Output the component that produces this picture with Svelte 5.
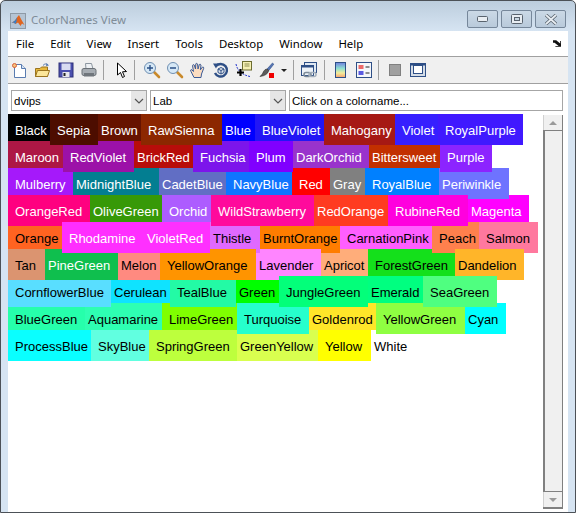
<script lang="ts">
	// name, width, background, z-order, narrow left padding, dark text
	const rows = [
		[
			['Black', 42, '#000000', 0, 0],
			['Sepia', 48, '#4d0d00', 2, 0],
			['Brown', 43, '#661300', 0, 1],
			['RawSienna', 81, '#8c2700', 2, 0],
			['Blue', 33, '#0000ff', 0, 1],
			['BlueViolet', 69, '#2216f5', 0, 0],
			['Mahogany', 71, '#a61914', 2, 0],
			['Violet', 43, '#361fff', 1, 0],
			['RoyalPurple', 85, '#4019ff', 4, 0]
		],
		[
			['Maroon', 55, '#ad1745', 0, 0],
			['RedViolet', 71, '#9c11a8', 1, 0],
			['BrickRed', 59, '#b80d0a', 0, 1],
			['Fuchsia', 56, '#7c15eb', 1, 0],
			['Plum', 44, '#8000ff', 1, 0],
			['DarkOrchid', 76, '#9933cc', 0, 1],
			['Bittersweet', 71, '#c23000', 0, 1],
			['Purple', 52, '#8c24ff', 3, 0]
		],
		[
			['Mulberry', 65, '#a519fa', 0, 0],
			['MidnightBlue', 86, '#037e91', 0, 1],
			['CadetBlue', 67, '#616ec4', 0, 1],
			['NavyBlue', 66, '#0f75ff', 0, 0],
			['Red', 38, '#ff0000', 0, 0],
			['Gray', 35, '#808080', 0, 1],
			['RoyalBlue', 74, '#0080ff', 2, 0],
			['Periwinkle', 70, '#6e73ff', 2, 1]
		],
		[
			['OrangeRed', 82, '#ff0080', 1, 0],
			['OliveGreen', 72, '#379908', 0, 1],
			['Orchid', 49, '#ad5cff', 0, 0],
			['WildStrawberry', 103, '#ff0a9c', 4, 0],
			['RedOrange', 74, '#ff3b21', 2, 1],
			['RubineRed', 80, '#ff00de', 2, 0],
			['Magenta', 61, '#ff00ff', 0, 1]
		],
		[
			['Orange', 54, '#ff6321', 0, 0, 1],
			['Rhodamine', 78, '#ff2eff', 5, 0],
			['VioletRed', 70, '#ff30ff', 5, 0],
			['Thistle', 50, '#e069ff', 3, 1, 1],
			['BurntOrange', 80, '#ff7d00', 1, 1, 1],
			['CarnationPink', 92, '#ff5eff', 0, 0, 1],
			['Peach', 47, '#ff804d', 1, 0, 1],
			['Salmon', 59, '#ff789e', 1, 0, 1]
		],
		[
			['Tan', 37, '#db9470', 2, 0, 1],
			['PineGreen', 73, '#0fbf4e', 2, 1],
			['Melon', 42, '#ff8a80', 2, 1, 1],
			['YellowOrange', 96, '#ff9400', 4, 0, 1],
			['Lavender', 65, '#ff85ff', 2, 1, 1],
			['Apricot', 47, '#ffad7a', 0, 1, 1],
			['ForestGreen', 87, '#14e01b', 0, 0, 1],
			['Dandelion', 69, '#ffb529', 2, 1, 1]
		],
		[
			['CornflowerBlue', 103, '#59deff', 1, 0, 1],
			['Cerulean', 59, '#0fe3ff', 0, 1, 1],
			['TealBlue', 66, '#23faa5', 1, 0, 1],
			['Green', 43, '#00ff00', 0, 1, 1],
			['JungleGreen', 89, '#03ff7a', 2, 0, 1],
			['Emerald', 55, '#00ff80', 0, 1, 1],
			['SeaGreen', 74, '#4fff80', 2, 0, 1]
		],
		[
			['BlueGreen', 77, '#26ffab', 0, 0, 1],
			['Aquamarine', 77, '#2effb2', 0, 1, 1],
			['LimeGreen', 75, '#80ff00', 0, 0, 1],
			['Turquoise', 72, '#26ffcc', 1, 0, 1],
			['Goldenrod', 67, '#ffe629', 0, 1, 1],
			['YellowGreen', 89, '#8fff42', 1, 0, 1],
			['Cyan', 41, '#00ffff', 1, 1, 1]
		],
		[
			['ProcessBlue', 83, '#0affff', 0, 0, 1],
			['SkyBlue', 58, '#61ffe0', 0, 0, 1],
			['SpringGreen', 88, '#bdff3d', 0, 0, 1],
			['GreenYellow', 81, '#d9ff4f', 0, 1, 1],
			['Yellow', 53, '#ffff00', 0, 0, 1],
			['White', 50, '#ffffff', 0, 1, 1]
		]
	];

	const menus = ['File', 'Edit', 'View', 'Insert', 'Tools', 'Desktop', 'Window', 'Help'];
</script>

<div class="window">
	<div class="titlebar">
		<svg class="logo" width="16" height="16" viewBox="0 0 16 16">
			<rect x="0.5" y="0.5" width="15" height="15" fill="#b4c4d4" stroke="#8e9aa6" />
			<path d="M1.5 10 L5 7.5 L7 4.5 L9 2 L11 6 L14.5 12 L12 10.5 L10.5 13 L8 9.5 L5.5 11 L3.5 9.5 Z" fill="#e0641e" />
			<path d="M1.5 10 L5 7.5 L7 4.5 L6.5 8.5 L5.5 11 L3.5 9.5 Z" fill="#3d7fc4" />
		</svg>
		<span class="title">ColorNames View</span>
		<div class="caption">
			<div class="capbtn">
				<svg width="11" height="6" viewBox="0 0 11 6"><rect x="0.5" y="0.5" width="10" height="5" rx="1" fill="#e8edf2" stroke="#59636e" /></svg>
			</div>
			<div class="capbtn">
				<svg width="12" height="10" viewBox="0 0 12 10"><rect x="0.5" y="0.5" width="11" height="9" rx="1" fill="#e8edf2" stroke="#59636e" /><rect x="3.5" y="3.5" width="5" height="3" fill="#c9d6e2" stroke="#59636e" /></svg>
			</div>
			<div class="capbtn">
				<svg width="14" height="11" viewBox="0 0 14 11"><path d="M2 1 L12 10 M12 1 L2 10" stroke="#59636e" stroke-width="3.4" /><path d="M2 1 L12 10 M12 1 L2 10" stroke="#e8edf2" stroke-width="1.8" /></svg>
			</div>
		</div>
	</div>

	<div class="client">
		<div class="menubar">
			{#each menus as menu}
				<span class="menu">{menu}</span>
			{/each}
			<svg class="dock" width="8" height="7" viewBox="0 0 10 8"><path d="M0 0 H4 L9 4 V1 L10 1 V8 H3 L3 7 H7 L2 3 H0 Z" fill="#111" /></svg>
		</div>

		<div class="toolbar">
			<div class="tool">
				<svg width="17" height="17" viewBox="0 0 17 17">
					<path d="M3.5 2.5 H10.5 L14.5 6.5 V15.5 H3.5 Z" fill="#fff" stroke="#5a7cb0" />
					<path d="M10.5 2.5 V6.5 H14.5" fill="#d8e4f2" stroke="#5a7cb0" />
					<circle cx="3.5" cy="3.5" r="2" fill="#f6c27a" stroke="#d9603a" />
				</svg>
			</div>
			<div class="tool">
				<svg width="17" height="17" viewBox="0 0 17 17">
					<path d="M1.5 6.5 H6 L7.5 5 H13.5 V14.5 H1.5 Z" fill="#e8b93c" stroke="#9a7420" />
					<path d="M1.5 14.5 L3.5 8.5 H15.5 L13.5 14.5 Z" fill="#fbe69a" stroke="#9a7420" />
					<path d="M9 3.5 C10.5 1.5 12.5 1.5 14 3" fill="none" stroke="#5a7cb0" />
					<path d="M12.5 1 L15 3.5 L12 4 Z" fill="#5a7cb0" />
				</svg>
			</div>
			<div class="tool">
				<svg width="16" height="16" viewBox="0 0 16 16">
					<rect x="1" y="1" width="14" height="14" fill="#4a4fae" stroke="#2c2f76" />
					<rect x="3.5" y="1.5" width="9" height="6.5" fill="#d9dcf2" />
					<rect x="4.5" y="10" width="7" height="5" fill="#e6e6ec" />
					<rect x="5.5" y="11" width="2" height="3" fill="#222" />
				</svg>
			</div>
			<div class="tool">
				<svg width="16" height="16" viewBox="0 0 16 16">
					<path d="M4.5 1.5 H10.5 L12 7 H5 Z" fill="#eef1f4" stroke="#8c96a0" />
					<path d="M1 8 Q1 6.5 3 6.5 H13 Q15 6.5 15 8.5 V12 Q15 13.5 13 13.5 H3 Q1 13.5 1 12 Z" fill="#a6acb2" stroke="#6a7076" />
					<rect x="3" y="11" width="10" height="3.5" fill="#6f757b" />
				</svg>
			</div>
			<div class="sep"></div>
			<div class="tool">
				<svg width="12" height="17" viewBox="0 0 12 17">
					<path d="M1.5 1 V13 L4.5 10.5 L6.5 15.5 L8.5 14.5 L6.5 9.8 L10.5 9.5 Z" fill="#fff" stroke="#000" />
				</svg>
			</div>
			<div class="sep second"></div>
			<div class="tool">
				<svg width="18" height="18" viewBox="0 0 18 18">
					<path d="M10.5 10.5 L16 16" stroke="#c98a2c" stroke-width="2.6" stroke-linecap="round" />
					<circle cx="7" cy="7" r="5.5" fill="#d6e8f6" stroke="#6f8fb2" />
					<path d="M4 7 H10 M7 4 V10" stroke="#2a4f86" stroke-width="1.4" />
				</svg>
			</div>
			<div class="tool">
				<svg width="18" height="18" viewBox="0 0 18 18">
					<path d="M10.5 10.5 L16 16" stroke="#c98a2c" stroke-width="2.6" stroke-linecap="round" />
					<circle cx="7" cy="7" r="5.5" fill="#d6e8f6" stroke="#6f8fb2" />
					<path d="M4 7 H10" stroke="#2a4f86" stroke-width="1.4" />
				</svg>
			</div>
			<div class="tool">
				<svg width="17" height="17" viewBox="0 0 17 17">
					<path d="M5 15.5 L2 9.5 Q1 7.5 2.5 7.5 L4.5 9.5 L3.5 3.5 Q4 2 5.2 3 L6.5 7 L6.8 1.8 Q7.8 0.8 8.6 2 L9 7 L10.3 2.5 Q11.3 1.6 12 3 L11.4 7.8 L13.5 5 Q15 4.8 14.7 6.3 L12.5 12 L12 15.5 Z" fill="#fbdcc0" stroke="#3b5a96" />
				</svg>
			</div>
			<div class="tool">
				<svg width="17" height="17" viewBox="0 0 17 17">
					<path d="M4 4 A6.3 6.3 0 1 1 3 11" fill="none" stroke="#2e4f86" stroke-width="2.4" />
					<path d="M1 1.5 L6.5 1.5 L4 6.5 Z" fill="#2e4f86" />
					<path d="M6 7 L9 5.5 L12 7 V10.5 L9 12 L6 10.5 Z M6 7 L9 8.5 L12 7 M9 8.5 V12" fill="#dfe6ee" stroke="#2e4f86" />
				</svg>
			</div>
			<div class="tool">
				<svg width="18" height="18" viewBox="0 0 18 18">
					<path d="M1 3 Q3 13 15 15.5" fill="none" stroke="#2233cc" stroke-dasharray="2 1" />
					<rect x="7.5" y="0.5" width="9" height="8.5" fill="#f6f0b4" stroke="#6c6c30" />
					<path d="M9.5 3 H14.5 M9.5 5 H14.5" stroke="#8c8c50" />
					<path d="M5.5 8 V15 M2 11.5 H9" stroke="#000" stroke-width="2.2" />
				</svg>
			</div>
			<div class="tool">
				<svg width="17" height="17" viewBox="0 0 17 17">
					<path d="M9 7 L14.5 1 L15.8 2.2 L10.8 8.5 Z" fill="#5674b4" stroke="#2e4f86" stroke-width="0.6" />
					<path d="M9 7 L10.8 8.5 Q9.5 13.5 2 14.5 Q5 12 5.5 9.5 Q6.8 7 9 7 Z" fill="#5c5c5c" stroke="#2a2a2a" stroke-width="0.6" />
					<rect x="11" y="11" width="5" height="5" fill="#f00000" />
				</svg>
			</div>
			<div class="dropdown"></div>
			<div class="sep third"></div>
			<div class="tool">
				<svg width="17" height="18" viewBox="0 0 17 18">
					<rect x="3.5" y="1.5" width="12" height="10" fill="#dfe8f2" stroke="#2e4f86" />
					<rect x="0.5" y="4.5" width="12" height="10" fill="#eef3f8" stroke="#2e4f86" />
					<rect x="0.5" y="4.5" width="12" height="2" fill="#2e4f86" />
					<rect x="3" y="11.5" width="7" height="4" rx="2" fill="none" stroke="#7c8a98" stroke-width="1.6" />
					<rect x="8" y="11.5" width="7" height="4" rx="2" fill="none" stroke="#a4b0bc" stroke-width="1.6" />
				</svg>
			</div>
			<div class="sep third"></div>
			<div class="tool">
				<svg width="11" height="16" viewBox="0 0 11 16">
					<defs>
						<linearGradient id="bar" x1="0" y1="0" x2="0" y2="1">
							<stop offset="0" stop-color="#6f7fe0" />
							<stop offset="0.4" stop-color="#8fe0d0" />
							<stop offset="0.7" stop-color="#f4ec9a" />
							<stop offset="1" stop-color="#f4a070" />
						</linearGradient>
					</defs>
					<rect x="0.5" y="0.5" width="10" height="15" fill="url(#bar)" stroke="#2e4f86" />
				</svg>
			</div>
			<div class="tool">
				<svg width="16" height="16" viewBox="0 0 16 16">
					<rect x="0.5" y="0.5" width="15" height="15" fill="#f4f6fa" stroke="#2e4f86" />
					<rect x="2.5" y="3" width="5" height="4" fill="#ec6a6a" />
					<rect x="2.5" y="9" width="5" height="4" fill="#5a5ae0" />
					<path d="M9.5 5 H13.5 M9.5 11 H13.5" stroke="#222" />
				</svg>
			</div>
			<div class="sep third"></div>
			<div class="tool">
				<svg width="12" height="12" viewBox="0 0 12 12">
					<rect x="0.5" y="0.5" width="11" height="11" fill="#a0a0a0" stroke="#808080" />
				</svg>
			</div>
			<div class="tool">
				<svg width="16" height="14" viewBox="0 0 16 14">
					<rect x="0.5" y="0.5" width="15" height="13" fill="#d4dce6" stroke="#2e4f86" />
					<rect x="0.5" y="0.5" width="15" height="2" fill="#2e4f86" />
					<rect x="3.5" y="2.5" width="9" height="8" fill="#fff" stroke="#2e4f86" />
				</svg>
			</div>
		</div>

		<div class="controls">
			<div class="combo">
				<span class="value">dvips</span>
				<span class="arrow"><svg width="10" height="6" viewBox="0 0 10 6"><path d="M1 1 L5 5 L9 1" fill="none" stroke="#555" stroke-width="1.2" /></svg></span>
			</div>
			<div class="combo">
				<span class="value">Lab</span>
				<span class="arrow"><svg width="10" height="6" viewBox="0 0 10 6"><path d="M1 1 L5 5 L9 1" fill="none" stroke="#555" stroke-width="1.2" /></svg></span>
			</div>
			<div class="field">Click on a colorname...</div>
		</div>

		<div class="body">
			<div class="names">
				{#each rows as row}
					<div class="row">
						{#each row as [name, width, color, z, narrow, dark]}
							<div
								class="cell"
								class:narrow
								class:dark
								style:width="{width}px"
								style:background={color}
								style:z-index={z}
							>
								{name}
							</div>
						{/each}
					</div>
				{/each}
			</div>
			<div class="scrollbar">
				<div class="step"><span class="up"></span></div>
				<div class="track"></div>
				<div class="step"><span class="down"></span></div>
			</div>
		</div>
	</div>
</div>

<style>
	:global(body) {
		margin: 0;
		background: #fff;
	}

	.window {
		display: flex;
		flex-direction: column;
		box-sizing: border-box;
		width: 576px;
		height: 513px;
		border: 1px solid #4c5157;
		border-radius: 5px 5px 0 0;
		background: linear-gradient(#bccddd, #d6e4f2 30px);
		overflow: hidden;
	}

	.titlebar {
		display: flex;
		align-items: center;
		flex: none;
		height: 30px;
		padding-left: 9px;
	}

	.logo {
		margin-top: 9px;
	}

	.title {
		margin: 7px 0 0 5px;
		font:
			11.5px 'Noto Sans',
			sans-serif;
		color: #7f8c98;
	}

	.caption {
		display: flex;
		gap: 3px;
		margin: 6px 9px 0 auto;
	}

	.capbtn {
		display: flex;
		align-items: center;
		justify-content: center;
		box-sizing: border-box;
		width: 31px;
		height: 18px;
		border: 1px solid #76879a;
		border-radius: 2px;
		background: linear-gradient(#cbd9e6, #b9cadb);
	}

	.client {
		display: flex;
		flex-direction: column;
		flex: 1;
		margin: 0 7px;
		background: #fff;
		min-height: 0;
	}

	.menubar {
		display: flex;
		align-items: center;
		flex: none;
		box-sizing: border-box;
		height: 26px;
		padding-left: 8px;
		border-bottom: 1px solid #a0a0a0;
		font:
			11.4px 'Noto Sans',
			sans-serif;
		color: #000;
	}

	.menu {
		margin-right: 16px;
	}

	.dock {
		margin-left: auto;
		margin-right: 7px;
	}

	.toolbar {
		display: flex;
		align-items: center;
		flex: none;
		box-sizing: border-box;
		height: 27px;
		border-bottom: 1px solid #a0a0a0;
		background: #f0f0f0;
	}

	.tool {
		display: flex;
		align-items: center;
		justify-content: center;
		flex: none;
		width: 23px;
		height: 22px;
	}

	.sep {
		flex: none;
		width: 1px;
		height: 20px;
		margin: 0 6px 0 3px;
		background: #a0a0a0;
	}

	.sep.second {
		margin: 0 5px 0 1px;
	}

	.sep.third {
		margin: 0 4px 0 3px;
	}

	.dropdown {
		flex: none;
		width: 12px;
		height: 3px;
		position: relative;
	}

	.dropdown::after {
		content: '';
		position: absolute;
		left: 3px;
		top: 0;
		border: 3px solid transparent;
		border-top: 3px solid #222;
		border-bottom: 0;
	}

	.controls {
		display: flex;
		flex: none;
		gap: 3px;
		box-sizing: border-box;
		height: 30px;
		padding: 6px 5px 3px 3px;
		font:
			11.5px 'Liberation Sans',
			sans-serif;
		color: #000;
	}

	.combo {
		display: flex;
		align-items: center;
		box-sizing: border-box;
		width: 136px;
		border: 1px solid #a6a6a6;
		background: #fff;
	}

	.value {
		flex: 1;
		padding-left: 2px;
	}

	.arrow {
		display: flex;
		align-items: center;
		justify-content: center;
		width: 15px;
		height: 100%;
		background: #e6e6e6;
	}

	.field {
		display: flex;
		align-items: center;
		flex: 1;
		box-sizing: border-box;
		padding-left: 2px;
		border: 1px solid #a6a6a6;
		background: #fff;
	}

	.body {
		display: flex;
		flex: 1;
		min-height: 0;
	}

	.names {
		flex: 1;
		font:
			13px 'Liberation Sans',
			sans-serif;
	}

	.row {
		display: flex;
		height: 27px;
	}

	.cell {
		flex: none;
		box-sizing: border-box;
		height: 31px;
		padding-left: 7px;
		line-height: 33px;
		color: #fff;
		white-space: nowrap;
		overflow: hidden;
	}

	.cell.narrow {
		padding-left: 3px;
	}

	.cell.dark {
		color: #000;
	}

	.scrollbar {
		display: flex;
		flex-direction: column;
		flex: none;
		box-sizing: border-box;
		width: 20px;
		margin: 1px 5px 3px 0;
		border-right: 1px solid #808080;
		border-bottom: 2px solid #808080;
		background: #f0f0f0;
	}

	.step {
		display: flex;
		align-items: center;
		justify-content: center;
		flex: none;
		height: 15px;
		border-left: 1px solid #d0d0d0;
	}

	.track {
		flex: 1;
		border-left: 2px solid #808080;
		border-top: 1px solid #808080;
		border-bottom: 1px solid #808080;
	}

	.up {
		border: 4px solid transparent;
		border-bottom: 4px solid #9a9a9a;
		border-top: 0;
	}

	.down {
		border: 4px solid transparent;
		border-top: 4px solid #9a9a9a;
		border-bottom: 0;
	}
</style>
